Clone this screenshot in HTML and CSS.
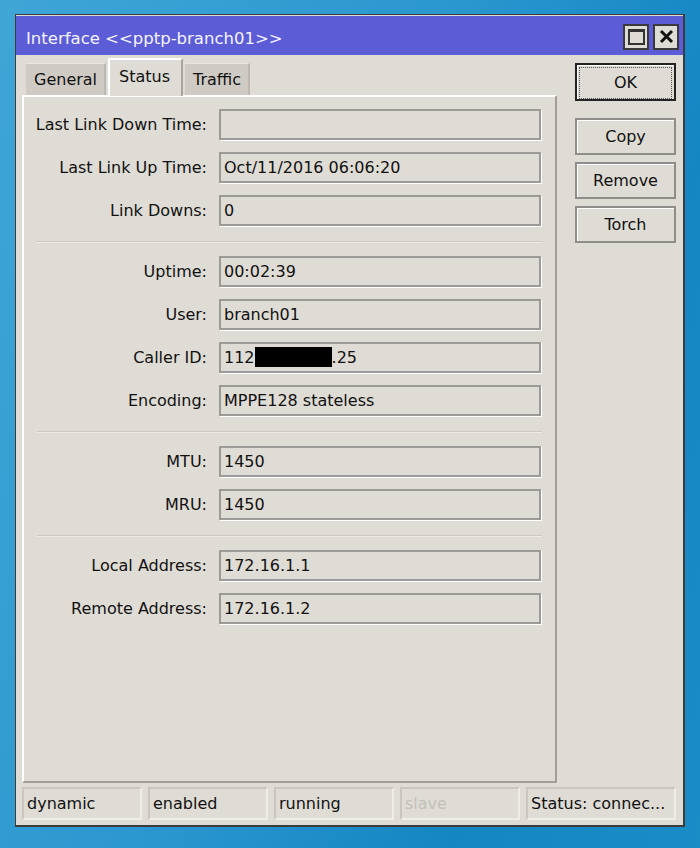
FILE: index.html
```html
<!DOCTYPE html>
<html lang="en">
<head>
  <meta charset="UTF-8" />
  <title>Interface &lt;&lt;pptp-branch01&gt;&gt;</title>
  <link rel="stylesheet" href="styles.css">
</head>
<body>
  <div class="window">
    <div class="titlebar">
      <span class="title">Interface &lt;&lt;pptp-branch01&gt;&gt;</span>
      <div class="title-buttons">
        <span class="tbtn"><span class="max-box"></span></span>
        <span class="tbtn">
          <svg width="15" height="15" viewBox="0 0 15 15"><path d="M2 2 L13 13 M13 2 L2 13" stroke="#111" stroke-width="3"/></svg>
        </span>
      </div>
    </div>

    <div class="content">
      <div class="main">
        <div class="tabs">
          <div class="tab">General</div>
          <div class="tab active">Status</div>
          <div class="tab">Traffic</div>
        </div>
        <div class="panel">
          <div class="form">
            <label>Last Link Down Time:</label><div class="field"></div>
            <label>Last Link Up Time:</label><div class="field">Oct/11/2016 06:06:20</div>
            <label>Link Downs:</label><div class="field">0</div>
          </div>
          <div class="sep"></div>
          <div class="form">
            <label>Uptime:</label><div class="field">00:02:39</div>
            <label>User:</label><div class="field">branch01</div>
            <label>Caller ID:</label><div class="field">112<span class="redact"></span>.25</div>
            <label>Encoding:</label><div class="field">MPPE128 stateless</div>
          </div>
          <div class="sep"></div>
          <div class="form">
            <label>MTU:</label><div class="field">1450</div>
            <label>MRU:</label><div class="field">1450</div>
          </div>
          <div class="sep"></div>
          <div class="form">
            <label>Local Address:</label><div class="field">172.16.1.1</div>
            <label>Remote Address:</label><div class="field">172.16.1.2</div>
          </div>
        </div>
      </div>

      <div class="side">
        <button class="btn ok"><span>OK</span></button>
        <button class="btn copy">Copy</button>
        <button class="btn">Remove</button>
        <button class="btn">Torch</button>
      </div>
    </div>

    <div class="statusbar">
      <div class="cell">dynamic</div>
      <div class="cell">enabled</div>
      <div class="cell">running</div>
      <div class="cell dim">slave</div>
      <div class="cell wide">Status: connec...</div>
    </div>
  </div>
</body>
</html>
```

FILE: styles.css
```css
body {
  margin: 0;
  width: 700px;
  height: 848px;
  overflow: hidden;
  background: linear-gradient(110deg, #3fa6d6 0%, #2b97cf 45%, #1486c2 75%, #1a8cc6 100%);
  font-family: 'DejaVu Sans', Verdana, sans-serif;
  font-size: 16px;
  color: #111;
}

.window {
  margin: 14px 0 0 15px;
  width: 667px;
  height: 810px;
  background: #dfdcd5;
  border: 1px solid #3c3c3c;
  border-right-width: 2px;
  border-bottom-width: 2px;
  display: flex;
  flex-direction: column;
}

.titlebar {
  height: 39px;
  margin-top: 1px;
  background: #5d5cd7;
  display: flex;
  align-items: center;
  justify-content: space-between;
  padding: 0 4px 0 10px;
}

.title {
  color: #f4f4ff;
  font-size: 16.5px;
  padding-top: 6px;
}

.title-buttons {
  display: flex;
  gap: 4px;
  margin-top: 2px;
}

.tbtn {
  width: 22px;
  height: 22px;
  background: #dfdcd5;
  border: 2px solid #3a3a3a;
  display: flex;
  align-items: center;
  justify-content: center;
}

.max-box {
  width: 13px;
  height: 11px;
  border: 2px solid #333;
  border-top-width: 3px;
}

.content {
  display: flex;
  padding: 3px 0 0 6px;
}

.main {
  width: 535px;
}

.tabs {
  display: flex;
  align-items: flex-end;
  height: 37px;
  padding-left: 4px;
}

.tab {
  height: 32px;
  line-height: 31px;
  padding: 0 7px 0 8px;
  background: #cfcbc4;
  border-top: 1px solid #e8e6e0;
  border-right: 2px solid #bcb8b1;
  margin-right: 2px;
  box-sizing: border-box;
}

.tab.active {
  height: 38px;
  line-height: 33px;
  background: #dfdcd5;
  border-top: 2px solid #ffffff;
  border-left: 2px solid #ffffff;
  border-right: 2px solid #a9a6a0;
  margin-bottom: -1px;
  padding: 0 11px 0 9px;
}

.panel {
  height: 688px;
  box-sizing: border-box;
  border-top: 2px solid #ffffff;
  border-left: 2px solid #ffffff;
  border-right: 2px solid #a19e98;
  border-bottom: 2px solid #a19e98;
  padding-top: 12px;
}

.form {
  display: grid;
  grid-template-columns: 183px 322px;
  column-gap: 12px;
  row-gap: 12px;
}

.form label {
  text-align: right;
  height: 31px;
  line-height: 31px;
  white-space: nowrap;
}

.field {
  height: 31px;
  box-sizing: border-box;
  line-height: 27px;
  padding-left: 3px;
  border: 2px solid #9c9a96;
  box-shadow: 1px 1px 0 #ffffff;
  white-space: nowrap;
}

.redact {
  display: inline-block;
  width: 77px;
  height: 20px;
  background: #000;
  vertical-align: -4px;
}

.sep {
  height: 1px;
  background: #cdc9c2;
  border-bottom: 1px solid #ecebe6;
  margin: 15px 13px 13px 13px;
}

.side {
  display: flex;
  flex-direction: column;
  margin: 5px 0 0 18px;
  width: 101px;
  gap: 7px;
}

.btn {
  height: 37px;
  font-family: inherit;
  font-size: 16px;
  color: #111;
  background: #dfdcd5;
  border: 2px solid #8f8d89;
  box-shadow: inset 1px 1px 0 #ffffff;
  padding: 0;
}

.btn.ok {
  height: 38px;
  border: 2px solid #222;
  padding: 2px;
}

.btn.ok span {
  display: block;
  height: 100%;
  line-height: 30px;
  border: 1px dotted #555;
}

.btn.copy {
  margin-top: 10px;
}

.statusbar {
  margin-top: auto;
  margin-bottom: 5px;
  display: flex;
  gap: 6px;
  padding-left: 6px;
}

.cell {
  width: 120px;
  height: 33px;
  box-sizing: border-box;
  line-height: 30px;
  padding-left: 3px;
  border: 2px solid #c9c6bf;
  border-right-color: #efede8;
  border-bottom-color: #efede8;
  white-space: nowrap;
  overflow: hidden;
}

.cell.dim {
  color: #c3c0ba;
}

.cell.wide {
  width: 150px;
}
```
